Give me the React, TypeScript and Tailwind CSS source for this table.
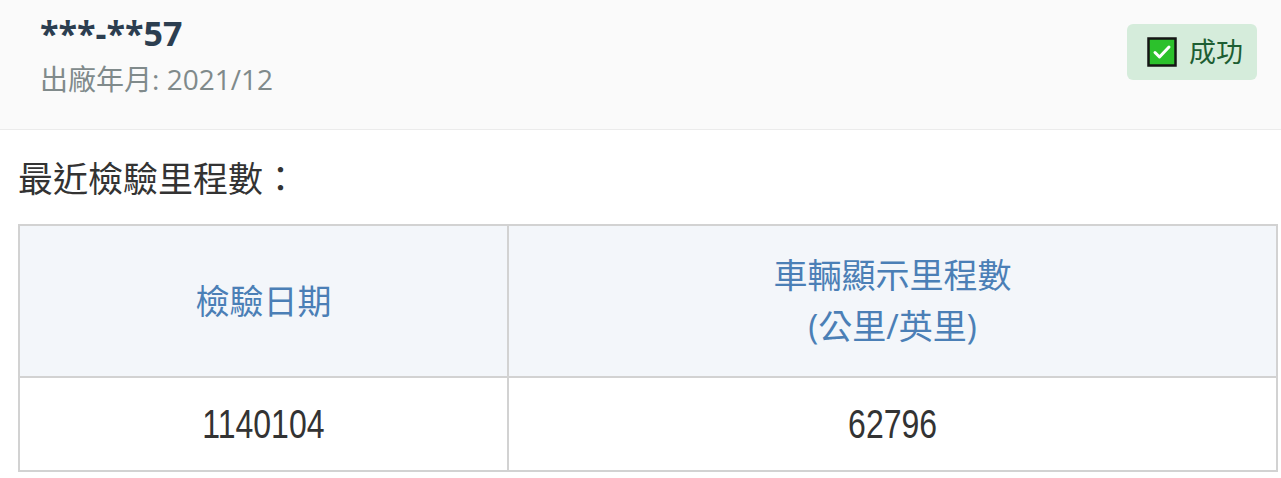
import React from "react"

const font = "font-['Open_Sans','Noto_Sans_CJK_TC',sans-serif]"

function CheckMark() {
  return (
    <svg width="30" height="30" viewBox="0 0 30 30" className="shrink-0">
      <rect x="1.5" y="1.5" width="27" height="27" fill="#2cc12c" stroke="#151515" strokeWidth="2.5" />
      <path d="M8 15.5l4.5 4.5 9.5-10" fill="none" stroke="#ffffff" strokeWidth="3" strokeLinecap="round" strokeLinejoin="round" />
    </svg>
  )
}

export default function App() {
  return (
    <div className={`w-[1281px] h-[478px] bg-white overflow-hidden ${font}`}>
      {/* Vehicle header */}
      <div className="flex h-[130px] items-start justify-between border-b border-[#ebebeb] bg-[#fafafa] pl-10 pr-6 pt-[13px]">
        <div className="flex flex-col gap-[6px]">
          <div className="text-[34px] font-bold leading-[40px] text-[#2c3e50]">***-**57</div>
          <div className="text-[28px] leading-[40px] text-[#808a8b]">出廠年月: 2021/12</div>
        </div>
        <div className="mt-[11px] flex h-[56px] items-center gap-[12px] rounded-md bg-[#d5ecdb] pl-5 pr-[14px]">
          <CheckMark />
          <span className="text-[27px] text-[#1d5e32]">成功</span>
        </div>
      </div>

      {/* Mileage section */}
      <div className="pl-[18px] pr-[3px]">
        <h2 className="mt-[24px] mb-[20px] text-[35px] font-normal leading-[50px] text-[#333333]">最近檢驗里程數：</h2>
        <table className="w-full border-collapse border-2 border-[#d2d2d2] text-center">
          <thead>
            <tr className="h-[152px] bg-[#f3f6fa] text-[34px] leading-[51px] text-[#4b7fb6]">
              <th className="w-[489px] border-2 border-[#d2d2d2] font-normal">檢驗日期</th>
              <th className="border-2 border-[#d2d2d2] font-normal">
                車輛顯示里程數
                <br />
                (公里/英里)
              </th>
            </tr>
          </thead>
          <tbody>
            <tr className="h-[94px] text-[40px] text-[#333333] font-['Liberation_Sans',sans-serif]">
              <td className="border-2 border-[#d2d2d2]">
                <span className="inline-block scale-x-[0.8]">1140104</span>
              </td>
              <td className="border-2 border-[#d2d2d2]">
                <span className="inline-block scale-x-[0.8]">62796</span>
              </td>
            </tr>
          </tbody>
        </table>
      </div>
    </div>
  )
}
